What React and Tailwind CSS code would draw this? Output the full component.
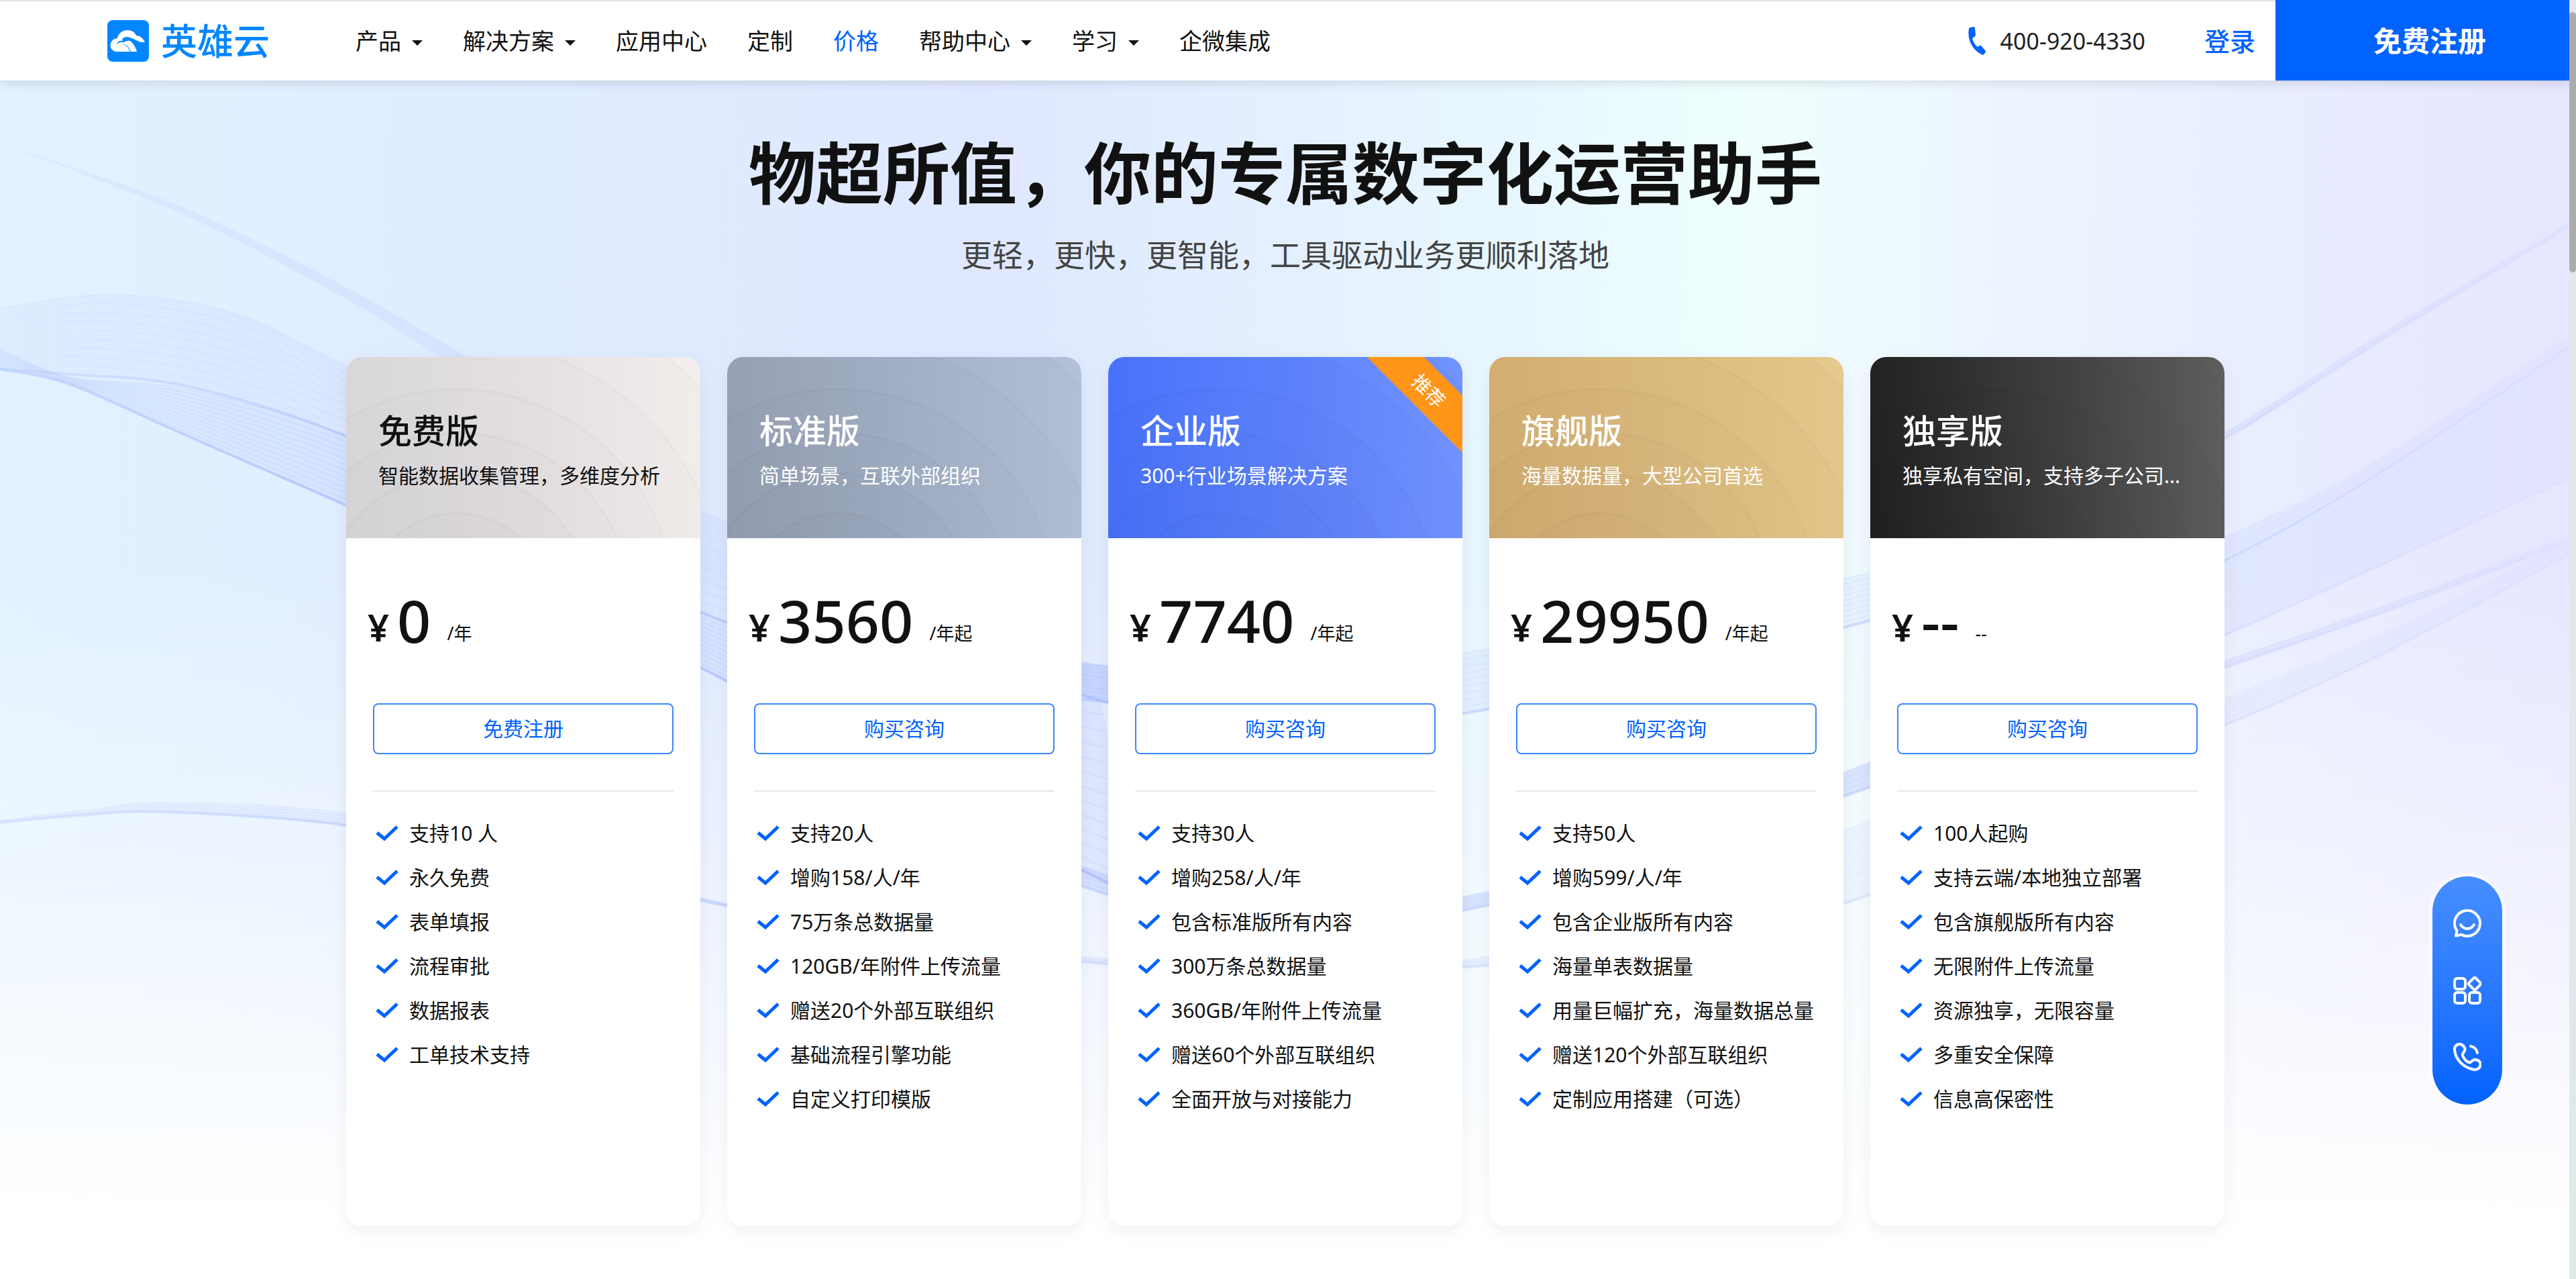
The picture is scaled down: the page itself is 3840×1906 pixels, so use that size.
import React from 'react';

const NAV = [
  { label: '产品', menu: true },
  { label: '解决方案', menu: true },
  { label: '应用中心' },
  { label: '定制' },
  { label: '价格', active: true },
  { label: '帮助中心', menu: true },
  { label: '学习', menu: true },
  { label: '企微集成' },
];

const PLANS = [
  {
    name: '免费版',
    desc: '智能数据收集管理，多维度分析',
    price: '0',
    unit: '/年',
    action: '免费注册',
    head: 'bg-linear-to-r from-[#dddbde] via-[#e8e4e6] to-[#f4efed] text-[#111]',
    features: ['支持10 人', '永久免费', '表单填报', '流程审批', '数据报表', '工单技术支持'],
  },
  {
    name: '标准版',
    desc: '简单场景，互联外部组织',
    price: '3560',
    unit: '/年起',
    action: '购买咨询',
    head: 'bg-linear-to-r from-[#99a4b7] to-[#b3c1d8] text-white',
    features: ['支持20人', '增购158/人/年', '75万条总数据量', '120GB/年附件上传流量', '赠送20个外部互联组织', '基础流程引擎功能', '自定义打印模版'],
  },
  {
    name: '企业版',
    desc: '300+行业场景解决方案',
    price: '7740',
    unit: '/年起',
    action: '购买咨询',
    badge: '推荐',
    head: 'bg-linear-to-r from-[#4a73ff] to-[#7294ff] text-white',
    features: ['支持30人', '增购258/人/年', '包含标准版所有内容', '300万条总数据量', '360GB/年附件上传流量', '赠送60个外部互联组织', '全面开放与对接能力'],
  },
  {
    name: '旗舰版',
    desc: '海量数据量，大型公司首选',
    price: '29950',
    unit: '/年起',
    action: '购买咨询',
    head: 'bg-linear-to-r from-[#d6b272] to-[#e6c98e] text-white',
    features: ['支持50人', '增购599/人/年', '包含企业版所有内容', '海量单表数据量', '用量巨幅扩充，海量数据总量', '赠送120个外部互联组织', '定制应用搭建（可选）'],
  },
  {
    name: '独享版',
    desc: '独享私有空间，支持多子公司...',
    price: '--',
    unit: '--',
    action: '购买咨询',
    head: 'bg-linear-to-r from-[#242424] to-[#5e5e5e] text-white',
    features: ['100人起购', '支持云端/本地独立部署', '包含旗舰版所有内容', '无限附件上传流量', '资源独享，无限容量', '多重安全保障', '信息高保密性'],
  },
];

// each ribbon is a top edge and a bottom edge, strands are drawn in between
const RIBBONS = [
  {
    top: [[0, 459], [168, 439], [350, 467], [516, 544], [780, 650], [1064, 770], [1340, 890], [1640, 992], [1900, 1010], [2200, 970], [2768, 858], [2960, 800]],
    bottom: [[0, 550], [105, 558], [280, 576], [516, 650], [780, 780], [1064, 920], [1340, 1010], [1640, 1045], [1900, 1080], [2200, 1060], [2768, 930], [2960, 860]],
    strands: 9,
    fill: 0.1,
    edge: 0.3,
  },
  {
    top: [[0, 520], [105, 562], [280, 580], [516, 650], [780, 780], [1064, 920], [1340, 1000], [1640, 1040]],
    bottom: [[0, 550], [105, 573], [280, 650], [516, 753], [780, 870], [1064, 1005], [1340, 1160], [1700, 1340]],
    strands: 12,
    fill: 0.16,
    edge: 0.45,
  },
  {
    top: [[1340, 930], [1480, 968], [1632, 990], [1800, 1000]],
    bottom: [[1340, 950], [1480, 990], [1632, 1042], [1800, 1080]],
    strands: 3,
    fill: 0.35,
    edge: 0.3,
  },
  {
    top: [[1500, 1240], [1640, 1300], [1900, 1370], [2200, 1332], [2480, 1260], [2768, 1143], [2960, 1060]],
    bottom: [[1500, 1270], [1640, 1330], [1900, 1400], [2200, 1353], [2480, 1290], [2768, 1180], [2960, 1120]],
    strands: 4,
    fill: 0.3,
    edge: 0.25,
  },
  {
    top: [[1500, 1423], [1620, 1426], [1900, 1450], [2200, 1428], [2480, 1350], [2768, 1230], [2960, 1160]],
    bottom: [[1500, 1431], [1620, 1434], [1900, 1460], [2200, 1440], [2480, 1410], [2768, 1340], [2960, 1250]],
    strands: 6,
    fill: 0.1,
    edge: 0.2,
  },
  {
    top: [[3200, 690], [3317, 644], [3558, 492], [3840, 326]],
    bottom: [[3200, 700], [3317, 654], [3558, 502], [3840, 332]],
    strands: 1,
    fill: 0.2,
    edge: 0.12,
  },
  {
    top: [[3200, 850], [3317, 800], [3520, 700], [3840, 495]],
    bottom: [[3200, 880], [3317, 835], [3520, 722], [3840, 510]],
    strands: 3,
    fill: 0.12,
    edge: 0.18,
  },
  {
    top: [[3200, 880], [3317, 835], [3520, 722], [3840, 510]],
    bottom: [[3200, 985], [3317, 946], [3520, 855], [3840, 708]],
    strands: 1,
    fill: 0.12,
    edge: 0.12,
  },
  {
    top: [[3200, 1025], [3317, 984], [3560, 900], [3840, 795]],
    bottom: [[3200, 1035], [3317, 995], [3560, 910], [3840, 803]],
    strands: 1,
    fill: 0.2,
    edge: 0.12,
  },
  {
    top: [[3200, 1080], [3317, 1040], [3560, 940], [3840, 800]],
    bottom: [[3200, 1116], [3317, 1080], [3560, 970], [3840, 820]],
    strands: 5,
    fill: 0.08,
    edge: 0.16,
  },
  {
    top: [[0, 1222], [120, 1208], [245, 1196], [516, 1212], [780, 1270], [1064, 1342], [1200, 1370]],
    bottom: [[0, 1226], [120, 1215], [245, 1210], [516, 1230], [780, 1284], [1064, 1346], [1200, 1374]],
    strands: 4,
    fill: 0.1,
    edge: 0.3,
  },
  {
    top: [[40, 226], [280, 312], [519, 430], [700, 534]],
    bottom: [[40, 227], [280, 322], [519, 446], [660, 534]],
    strands: 1,
    fill: 0.14,
    edge: 0.04,
  },
];

const ARCS = [487, 400, 325, 260, 200, 140];

function curve(points) {
  let d = '';
  for (let i = 0; i < points.length - 1; i++) {
    const p0 = points[i - 1] || points[i];
    const p1 = points[i];
    const p2 = points[i + 1];
    const p3 = points[i + 2] || p2;
    d += ` C ${p1[0] + (p2[0] - p0[0]) / 6} ${p1[1] + (p2[1] - p0[1]) / 6} ${p2[0] - (p3[0] - p1[0]) / 6} ${p2[1] - (p3[1] - p1[1]) / 6} ${p2[0]} ${p2[1]}`;
  }
  return d;
}

function mix(a, b, t) {
  return a.map((p, i) => [p[0] + (b[i][0] - p[0]) * t, p[1] + (b[i][1] - p[1]) * t]);
}

function Ribbon({ top, bottom, strands, fill, edge }) {
  const back = [...bottom].reverse();
  const lines = Array.from({ length: strands + 1 }, (_, i) => mix(top, bottom, i / strands));
  return (
    <g>
      <path
        d={`M ${top[0].join(' ')}${curve(top)} L ${back[0].join(' ')}${curve(back)} Z`}
        fill="#9fb2ff"
        fillOpacity={fill}
      />
      {lines.map((pts, i) => (
        <path
          key={i}
          d={`M ${pts[0].join(' ')}${curve(pts)}`}
          fill="none"
          stroke="#8fa6fb"
          strokeWidth={i === strands ? 4 : 2}
          strokeOpacity={i === strands ? edge : edge * 0.3}
        />
      ))}
    </g>
  );
}

function Backdrop() {
  return (
    <div className="absolute inset-0 -z-10 bg-[linear-gradient(91deg,#e2f2ff_0%,#e0edff_16%,#dfe8ff_38%,#e4f0ff_50%,#eafaff_62%,#effffd_67%,#eef8ff_74%,#e9f0ff_84%,#e8eaff_92%,#e6e6ff_100%)]">
      <div className="absolute inset-0 bg-[linear-gradient(180deg,transparent_44%,rgba(255,255,255,0.45)_70%,#fff_95%)]" />
      <svg className="absolute inset-0 w-full h-full" viewBox="0 0 3840 1906" preserveAspectRatio="none" aria-hidden="true">
        <defs>
          <linearGradient id="wave-fade" x1="0" y1="0" x2="1" y2="0">
            <stop offset="0" stopColor="#fff" stopOpacity="0.6" />
            <stop offset="0.12" stopColor="#fff" />
            <stop offset="0.86" stopColor="#fff" />
            <stop offset="1" stopColor="#fff" stopOpacity="0.4" />
          </linearGradient>
          <mask id="wave-mask">
            <rect width="3840" height="1906" fill="url(#wave-fade)" />
          </mask>
        </defs>
        <g mask="url(#wave-mask)">
          {RIBBONS.map((r, i) => <Ribbon key={i} {...r} />)}
        </g>
      </svg>
    </div>
  );
}

function Logo() {
  return (
    <a href="#home" className="flex items-center gap-[18px] text-[#0087ff]">
      <svg className="w-[62px] h-[62px]" viewBox="0 0 62 62" aria-hidden="true">
        <rect width="62" height="62" rx="8" fill="#0087ff" />
        <path d="M13 47C1 45 2 28 15 27 17 18 24 15 30 15c7 0 11 3 13 8 5 0 10 3 13 10-8 1-14-5-24-4C37 33 42 39 44 47Z" fill="#fff" />
        <path d="M14 36c1-5 6-6 9-5-2-3 1-6 6-6 8 1 14 5 20 8-7 1-13-3-19-2-3 0-4 2-6 2-4-1-7 0-10 3Z" fill="#0087ff" />
        <path d="M22 35c6 3 9 7 11 12h3c-2-6-6-10-11-12Z" fill="#8fd0ff" />
      </svg>
      <span className="text-[54px] leading-[60px] font-medium">英雄云</span>
    </a>
  );
}

function Header() {
  return (
    <header className="relative z-20 flex items-center h-[120px] pl-40 bg-white border-t-2 border-[#e3e3e3] shadow-[0_2px_16px_rgba(0,0,0,0.14)]">
      <Logo />
      <nav className="flex items-center gap-[60px] ml-32 text-[34px] leading-[48px] text-[#111]">
        {NAV.map(item => (
          <a
            key={item.label}
            href={`#${item.label}`}
            className={`flex items-center gap-4 whitespace-nowrap ${item.active ? 'text-[#0062ff]' : ''}`}
          >
            {item.label}
            {item.menu && (
              <svg className="w-4 h-2 mt-1.5" viewBox="0 0 16 8" fill="currentColor" aria-hidden="true">
                <path d="M0 0h16L8 8z" />
              </svg>
            )}
          </a>
        ))}
      </nav>
      <div className="flex items-center ml-auto self-stretch">
        <a href="tel:4009204330" className="flex items-center gap-[22px] text-[34px] leading-[48px] text-[#222]">
          <svg className="w-[26px] h-[42px]" viewBox="0 0 26 42" fill="#0062ff" aria-hidden="true">
            <path d="M1 3Q1 1 3 1L8 0Q10 0 10 2L11 12Q11 14 9 15L6 17Q8 25 14 30L17 28Q19 27 20 29L26 36Q26 38 25 39L22 42C7 36-2 20 1 3Z" />
          </svg>
          400-920-4330
        </a>
        <a href="#login" className="ml-[88px] mr-[30px] text-[38px] leading-[48px] font-medium text-[#0062ff]">登录</a>
        <button type="button" className="w-[440px] -mt-0.5 pl-5 self-stretch bg-[#0062ff] text-[42px] font-bold text-white cursor-pointer">
          免费注册
        </button>
      </div>
    </header>
  );
}

function PlanCard({ plan }) {
  return (
    <article className="flex flex-col min-w-0 bg-white rounded-[24px] shadow-[0_8px_28px_rgba(0,0,0,0.06)]">
      <div className={`relative h-[270px] px-12 pt-20 rounded-t-[24px] overflow-hidden ${plan.head}`}>
        <svg className="absolute left-0 top-0 w-[528px] h-[270px]" viewBox="0 0 528 270" aria-hidden="true">
          {ARCS.map(r => (
            <circle key={r} cx="165" cy="373" r={r} fill="#000" fillOpacity="0.006" stroke="#000" strokeOpacity="0.018" strokeWidth="4" />
          ))}
        </svg>
        <h2 className="relative text-[50px] leading-[60px] font-medium">{plan.name}</h2>
        <p className="relative mt-4 text-[30px] leading-[42px] whitespace-nowrap">{plan.desc}</p>
        {plan.badge && (
          <span className="absolute top-5 -right-20 w-[260px] rotate-45 bg-[#ff9518] text-center text-[28px] leading-[60px] text-white">
            {plan.badge}
          </span>
        )}
      </div>
      <div className="px-8 pt-[72px] flex items-end text-[#111]">
        <span className="text-[56px] leading-[80px] font-semibold">¥</span>
        <span className="ml-3 text-[88px] leading-[100px] font-medium">{plan.price}</span>
        <span className="ml-6 text-[27px] leading-[60px]">{plan.unit}</span>
      </div>
      <button type="button" className="mx-10 mt-[74px] h-[76px] rounded-[8px] border-2 border-[#3d87ff] text-[30px] leading-[40px] text-[#0062ff] cursor-pointer">
        {plan.action}
      </button>
      <hr className="mx-10 mt-[54px] border-0 h-0.5 bg-[#e8e8e8]" />
      <ul className="px-10 pt-[29px] pb-[156px] text-[30px] leading-[66px] text-[#111]">
        {plan.features.map(f => (
          <li key={f} className="flex items-center gap-4 pl-1 whitespace-nowrap">
            <svg className="w-[34px] h-6 shrink-0" viewBox="0 0 34 24" fill="none" stroke="#0062ff" strokeWidth="5" aria-hidden="true">
              <path d="M2 11l11 9L32 2" />
            </svg>
            {f}
          </li>
        ))}
      </ul>
    </article>
  );
}

function FloatBar() {
  return (
    <aside className="fixed right-[110px] top-[1306px] z-30 flex flex-col items-center justify-between w-[104px] h-[340px] pt-[49px] pb-[50px] rounded-full bg-linear-to-b from-[#468eff] to-[#0062ff] shadow-[0_0_5px_3px_#fff]">
      <button type="button" aria-label="在线客服" className="cursor-pointer">
        <svg className="w-[42px] h-[42px]" viewBox="0 0 42 42" fill="none" stroke="#fff" strokeWidth="4" strokeLinecap="round" strokeLinejoin="round">
          <path d="M5.500 32A19 19 0 1 1 12 37.700L4 39.500Z" />
          <path d="M11 23c5 8 15 8 20 0" />
        </svg>
      </button>
      <button type="button" aria-label="应用" className="cursor-pointer">
        <svg className="w-[42px] h-[42px]" viewBox="0 0 42 42" fill="none" stroke="#fff" strokeWidth="4">
          <rect x="2" y="3" width="16" height="16" rx="4" />
          <rect x="2" y="24" width="16" height="16" rx="4" />
          <rect x="24" y="24" width="16" height="16" rx="4" />
          <rect x="25" y="4" width="14" height="14" rx="2" transform="rotate(45 32 11)" />
        </svg>
      </button>
      <button type="button" aria-label="电话" className="cursor-pointer">
        <svg className="w-[42px] h-[42px]" viewBox="0 0 42 42" fill="none" stroke="#fff" strokeWidth="4" strokeLinecap="round" strokeLinejoin="round">
          <path d="M2 11C1 4 8 0 13 3c6 4 5 9 2 12-2 2-2 3 0 6 2 4 5 7 8 8 2 1 3 0 5-2 5-4 13-1 12.500 6-.5 6-6.500 8-11.500 6.500C15 36 4 26 2 11Z" />
          <path d="M26 5c5 1 9 5 10 10" />
        </svg>
      </button>
    </aside>
  );
}

export default function App() {
  return (
    <div className="relative isolate min-h-screen pr-2 overflow-hidden bg-white font-['Noto_Sans','Noto_Sans_CJK_SC',sans-serif]">
      <Header />
      <main className="px-10 pb-[78px] text-center">
        <h1 className="pt-[87px] text-[100px] leading-[100px] font-bold text-[#111]">物超所值，你的专属数字化运营助手</h1>
        <p className="mt-[42px] text-[46px] leading-[60px] text-[#444]">更轻，更快，更智能，工具驱动业务更顺利落地</p>
        <section className="grid grid-cols-5 gap-10 max-w-[2800px] mx-auto mt-[123px] text-left">
          {PLANS.map(plan => <PlanCard key={plan.name} plan={plan} />)}
        </section>
      </main>
      <Backdrop />
      <FloatBar />
      {/* scroll track */}
      <div className="fixed right-0 top-0 bottom-0 z-40 w-[10px] pt-[18px] bg-[#e2e7e9]" aria-hidden="true">
        <div className="h-[388px] rounded-full bg-[#acacac]" />
      </div>
    </div>
  );
}
